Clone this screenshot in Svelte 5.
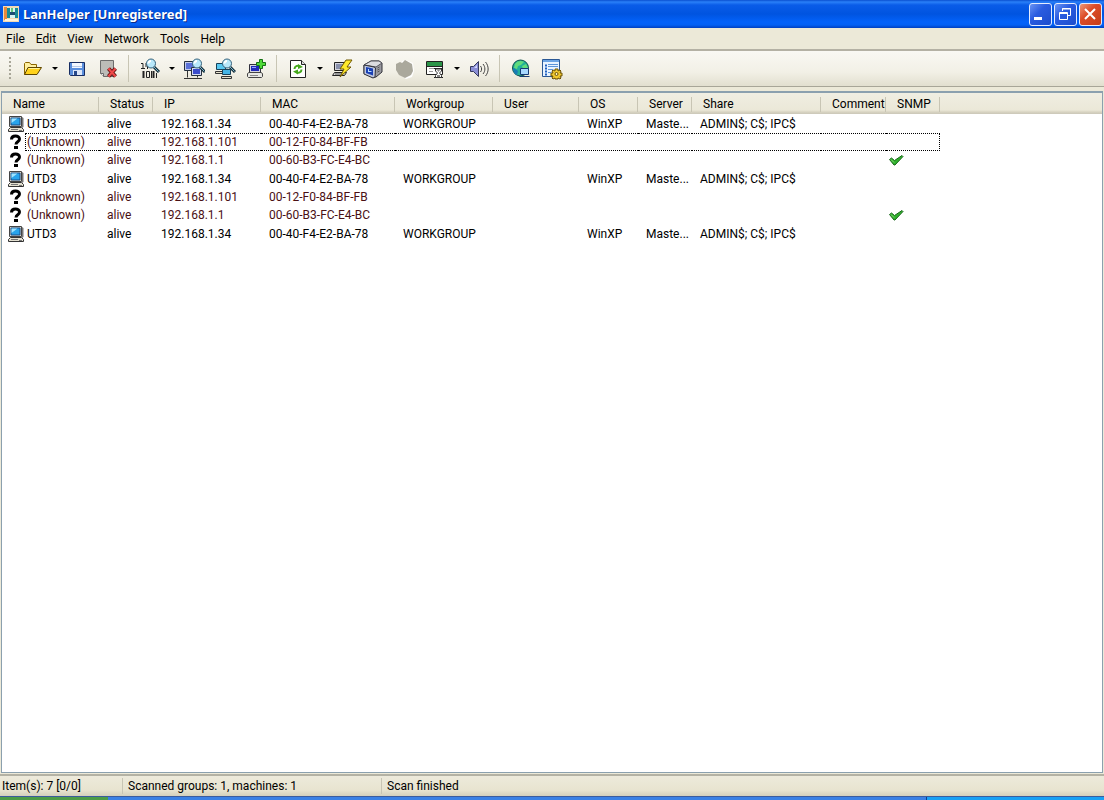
<script>
    const menus = ['File', 'Edit', 'View', 'Network', 'Tools', 'Help'];

    // Toolbar groups, drop marks a button with a menu arrow next to it
    const toolbar = [
        [
            { icon: 'open', label: 'Open', drop: true },
            { icon: 'save', label: 'Save' },
            { icon: 'delete', label: 'Delete' }
        ],
        [
            { icon: 'scanip', label: 'Scan IP', drop: true },
            { icon: 'scanlan', label: 'Scan LAN' },
            { icon: 'scangroup', label: 'Scan Workgroups' },
            { icon: 'add', label: 'Add Machine' }
        ],
        [
            { icon: 'refresh', label: 'Refresh', drop: true },
            { icon: 'wake', label: 'Wake Up' },
            { icon: 'remote', label: 'Remote' },
            { icon: 'stop', label: 'Stop', disabled: true },
            { icon: 'schedule', label: 'Schedule', drop: true },
            { icon: 'sound', label: 'Send Message' }
        ],
        [
            { icon: 'web', label: 'Web' },
            { icon: 'options', label: 'Options' }
        ]
    ];

    const columns = [
        { key: 'name', title: 'Name', width: 97 },
        { key: 'status', title: 'Status', width: 54 },
        { key: 'ip', title: 'IP', width: 108 },
        { key: 'mac', title: 'MAC', width: 134 },
        { key: 'workgroup', title: 'Workgroup', width: 98 },
        { key: 'user', title: 'User', width: 86 },
        { key: 'os', title: 'OS', width: 59 },
        { key: 'server', title: 'Server', width: 54 },
        { key: 'share', title: 'Share', width: 129 },
        { key: 'comment', title: 'Comment', width: 65 },
        { key: 'snmp', title: 'SNMP', width: 54 }
    ];

    const utd3 = {
        name: 'UTD3', status: 'alive', ip: '192.168.1.34', mac: '00-40-F4-E2-BA-78',
        workgroup: 'WORKGROUP', os: 'WinXP', server: 'Maste...', share: 'ADMIN$; C$; IPC$'
    };
    const client = { name: '(Unknown)', status: 'alive', ip: '192.168.1.101', mac: '00-12-F0-84-BF-FB', unknown: true };
    const router = { name: '(Unknown)', status: 'alive', ip: '192.168.1.1', mac: '00-60-B3-FC-E4-BC', unknown: true, snmp: true };

    const machines = [utd3, client, router, utd3, client, router, utd3];

    let focused = $state(1);
</script>

{#snippet lens(x)}
    <g transform="translate({x} 0)">
        <path d="M3 9l5 5" stroke="#17303c" stroke-width="3" />
        <path d="M3 9l4.500 4.500" stroke="#7cb8cc" stroke-width="1" />
        <circle cx="0" cy="5.500" r="4.500" fill="#b8e8fa" stroke="#34607a" />
        <path d="M-2.500 5.500a2.500 2.500 0 0 1 2.500-2.500" stroke="#fff" stroke-width="2" fill="none" />
    </g>
{/snippet}

{#snippet icon(name)}
    <svg viewBox="0 0 22 22" width="22" height="22" aria-hidden="true">
        {#if name === 'open'}
            <path d="M2.500 16.500v-11l1-1h4l1.500 2h5.500v3" fill="#fff0a0" stroke="#8a6500" />
            <path d="M2.500 16.500l3.500-7h13.500l-4.500 7z" fill="#ffd21c" stroke="#5e4500" />
            <path d="M6.500 10.500h11" stroke="#fff29a" />
        {:else if name === 'save'}
            <path d="M3.500 4.500h15v13h-14l-1-1z" fill="#5a8edc" stroke="#182d62" />
            <path d="M6 5h10v5H6z" fill="#f4f8ff" />
            <path d="M6 8h10v1H6z" fill="#b8cae8" />
            <path d="M7 12h9v5H7z" fill="#dce6f8" />
            <path d="M8 13h3v4H8z" fill="#26488a" />
        {:else if name === 'delete'}
            <path d="M3.500 2.500h13v16h-10l-3-3z" fill="#bcbcb8" stroke="#6c6c6c" />
            <path d="M3.500 15.500h3v3" fill="#eee" stroke="#6c6c6c" />
            <path d="M11.500 10.500l7 8M18.500 10.500l-7 8" stroke="#641414" stroke-width="4" />
            <path d="M11.500 10.500l7 8M18.500 10.500l-7 8" stroke="#f04a4a" stroke-width="2" />
        {:else if name === 'scanip'}
            <g fill="none" stroke="#222">
                <path d="M2 5.500h2v5M2 10.500h4M8.500 8v3M7 5v4" />
                <path d="M4.500 13v7M14.500 13v7" stroke-width="2" />
                <path d="M7.500 13.500h3v6h-3z" />
                <path d="M12.500 13v7M17.500 15v5" />
            </g>
            {@render lens(12)}
        {:else if name === 'scanlan'}
            <path d="M4.500 13v6.500M1 20.500h9M14.500 17v2.500M10 20.500h9" stroke="#333" fill="none" />
            <path d="M1.500 3.500h10v9h-10z" fill="#c4ccea" stroke="#25303f" />
            <path d="M3 5h7v6H3z" fill="#5a70d8" />
            <path d="M8.500 9.500h10v8h-10z" fill="#d4dcf4" stroke="#25303f" />
            <path d="M10 11h7v5h-7z" fill="#3a4ccc" />
            {@render lens(14)}
        {:else if name === 'scangroup'}
            <path d="M2.500 5.500h9v6h-9z" fill="#58c8f0" stroke="#164058" />
            <path d="M1.500 13.500h9v2h-9z" fill="#e4e0cc" stroke="#333" />
            <path d="M8.500 11.500h8v5h-8z" fill="#45b4e6" stroke="#164058" />
            <path d="M7.500 18.500h10v2h-10z" fill="#e4e0cc" stroke="#333" />
            {@render lens(13)}
        {:else if name === 'add'}
            <path d="M4.500 6.500h11v8h-11z" fill="#d5d5df" stroke="#30303c" />
            <path d="M6 8h8v5H6z" fill="#2028b8" />
            <path d="M7 9h4v1H7z" fill="#8fa4ff" />
            <path d="M2.500 15.500l1.500-1h12l1.500 1v3l-1 1h-13l-1-1z" fill="#e8e8e4" stroke="#444" />
            <path d="M5 17.500h8" stroke="#888" />
            <path d="M14.500 1.500h3v3h3v3h-3v3h-3v-3h-3v-3h3z" fill="#4fda38" stroke="#147012" />
        {:else if name === 'refresh'}
            <path d="M3.500 2.500h11l4 4v13h-15z" fill="#fff" stroke="#222" />
            <path d="M14.500 2.500v4h4" fill="#ddd" stroke="#222" />
            <path d="M7.500 11c0-3 3-4 5.500-2.500M14.500 11.500c0 3-3 4-5.500 2.500" stroke="#45a81c" stroke-width="2" fill="none" />
            <path d="M11 6l5 3-5 2zM11 11.500l-5 2 5 3z" fill="#45a81c" />
        {:else if name === 'wake'}
            <path d="M3.500 4.500h11v8h-11z" fill="#d4d4dc" stroke="#222" />
            <path d="M5 6h8v5H5z" fill="#8890ac" />
            <path d="M1.500 17.500l2-3h12l-2 3z" fill="#ddd" stroke="#222" />
            <path d="M4 16h8" stroke="#555" />
            <path d="M15 2l-6 9h4l-4 8 11-10h-4l5-7z" fill="#ffe92a" stroke="#705900" />
        {:else if name === 'remote'}
            <path d="M2 7l7-4h8l3 2v9l-6 5-3 .500-9-4z" fill="#9a9aa0" stroke="#33333a" />
            <path d="M9 3h8l3 2-6 4-12-2z" fill="#dcdce0" stroke="#55555c" />
            <path d="M2 7l10 2 1.500 1-.500 9-2 1-9-4z" fill="#c0c8e0" stroke="#33333a" />
            <path d="M4 9l7 1.500v7L4 15z" fill="#1b41b4" />
            <path d="M6 13.500h3.500M6.500 11v3" stroke="#b8dcff" fill="none" />
            <path d="M15.500 10l2-1M15.500 12l2-1M15.500 14l2-1" stroke="#555" />
        {:else if name === 'stop'}
            <path d="M9 3l4-1 7 3 1 8-2 6-6 2-6-4z" fill="#fff" />
            <path d="M3 6l4-2 2 1 3-3 7 4 1 7-2 4-6 3-6-3-3-5z" fill="#aaa89c" />
        {:else if name === 'schedule'}
            <path d="M2.500 3.500h16v13h-16z" fill="#fff" stroke="#222" />
            <path d="M3 4h15v4H3z" fill="#2b9448" />
            <path d="M3 8.500h15" stroke="#222" />
            <path d="M5 10.500h5M5 13.500h4" stroke="#999" />
            <path d="M10 10.500h9M10 19.500h9" stroke="#222" />
            <path d="M11.500 11v2l2 2-2 2.500v2h6v-2l-2-2.500 2-2v-2z" fill="#fff" stroke="#333" />
            <path d="M13 17h3v2h-3zM13 12h3l-1.500 2z" fill="#888" />
        {:else if name === 'sound'}
            <path d="M2.500 8.500h3l5-5v15l-5-5h-3z" fill="#8b8fd6" stroke="#34385c" />
            <path d="M4 10h2l3-3v3z" fill="#d4d8ff" />
            <path d="M12.500 8c1.500 2 1.500 4 0 6M15 6c2.500 3 2.500 7 0 10M17.500 4c3.500 4 3.500 10 0 14" stroke="#444" fill="none" />
        {:else if name === 'web'}
            <circle cx="10.500" cy="10" r="8" fill="#22b09a" stroke="#12524c" />
            <path d="M5 6c2-3 6-4 9-2l-3 3-3 1-1 3-3-1zM12 8l4-2 2 4-5 1z" fill="#62dc7c" />
            <path d="M3 10c2 0 3 2 5 3l-1 4c-3-1-4-4-4-7z" fill="#187cb4" />
            <path d="M10.500 10.500h8v6h-8z" fill="#a8d8ff" stroke="#163a74" />
            <path d="M9.500 18.500h10" stroke="#163a74" />
        {:else if name === 'options'}
            <path d="M1.500 1.500h17v17h-17z" fill="#e8f3ff" stroke="#2b5894" />
            <path d="M2 2h16v2H2z" fill="#6ca4e4" />
            <path d="M4 7.500h2M4 10.500h2M4 13.500h2M4 16.500h2" stroke="#2060c0" stroke-width="2" />
            <path d="M7 6.500h10M7 8.500h10M7 11.500h5M7 14.500h3" stroke="#5c94d8" />
            <path d="M14 11h3v2l2-1 1 1-1 2h2v3h-2l1 2-1 1-2-1v1h-3v-1l-2 1-1-1 1-2h-2v-3h2l-1-2 1-1 2 1z" fill="#f0c830" stroke="#6b5004" />
            <circle cx="15.500" cy="16" r="1.500" fill="#fff6c4" stroke="#6b5004" />
        {/if}
    </svg>
{/snippet}

{#snippet machineIcon()}
    <svg viewBox="0 0 18 18" width="18" height="18" aria-hidden="true">
        <path d="M2.500 1.500h12v10h-12z" fill="#d8d4c8" stroke="#444" />
        <path d="M4 3h9v7H4z" fill="#28a4ec" stroke="#174e8c" />
        <path d="M4.500 8l6-4.500h-6z" fill="#a0e4ff" />
        <path d="M15 2l1.500 1v9l-1.500 1z" fill="#777" />
        <path d="M1.500 14.500l2-2h11l2 2v2h-15z" fill="#e4e0d0" stroke="#333" />
        <path d="M4 14.500h7M12 15.500h3" stroke="#777" />
    </svg>
{/snippet}

{#snippet unknownIcon()}
    <svg viewBox="0 0 18 18" width="18" height="18" aria-hidden="true">
        <path d="M4.500 6.500c0-4.500 8-4.500 8-.5 0 3-3.500 2.500-3.500 5.500" fill="none" stroke="#000" stroke-width="3" />
        <path d="M7 13h4v3H7z" />
    </svg>
{/snippet}

<div class="window">
    <header class="titlebar">
        <svg class="app-icon" viewBox="0 0 16 16" width="16" height="16" aria-hidden="true">
            <path d="M0 0h16v16H0z" fill="#f2d9b4" />
            <path d="M1 1h3v13H1z" fill="#e88a3c" />
            <path d="M4 2h11v10H4z" fill="#d8f4f4" />
            <path d="M4 2h3v10H4zM12 2h3v10h-3z" fill="#188a94" />
            <path d="M7 6h5v3H7z" fill="#1d4c74" />
            <path d="M8 2h2v4H8z" fill="#68c878" />
            <path d="M2 13h13v2H2z" fill="#fff4dc" />
        </svg>
        <h1>LanHelper [Unregistered]</h1>
        <div class="caption-buttons">
            <button class="caption" aria-label="Minimize">
                <svg viewBox="0 0 20 20" width="20" height="20"><path d="M4 13h8v3H4z" fill="#fff" /></svg>
            </button>
            <button class="caption" aria-label="Restore">
                <svg viewBox="0 0 20 20" width="20" height="20" fill="none" stroke="#fff">
                    <path d="M7.500 7V4.500h8v7H13M7 5h9" />
                    <path d="M4.500 8.500h8v7h-8zM4 9.500h9" />
                </svg>
            </button>
            <button class="caption close" aria-label="Close">
                <svg viewBox="0 0 20 20" width="20" height="20"><path d="M5 5l10 10M15 5L5 15" stroke="#fff" stroke-width="2" /></svg>
            </button>
        </div>
    </header>

    <nav class="menubar">
        {#each menus as menu}
            <button>{menu}</button>
        {/each}
    </nav>

    <div class="toolbar" role="toolbar" aria-label="Main">
        <span class="grip"></span>
        {#each toolbar as group}
            <div class="group">
                {#each group as tool}
                    <button class="tool" aria-label={tool.label} disabled={tool.disabled}>
                        {@render icon(tool.icon)}
                    </button>
                    {#if tool.drop}
                        <button class="drop" aria-label="{tool.label} menu">
                            <svg viewBox="0 0 6 3" width="6" height="3"><path d="M0 0h6L3 3z" /></svg>
                        </button>
                    {/if}
                {/each}
            </div>
        {/each}
    </div>

    <main class="list">
        <table>
            <colgroup>
                {#each columns as column}
                    <col style="width: {column.width}px" />
                {/each}
                <col />
            </colgroup>
            <thead>
                <tr>
                    {#each columns as column}
                        <th>{column.title}</th>
                    {/each}
                    <td></td>
                </tr>
            </thead>
            <tbody>
                {#each machines as machine, i}
                    <tr class:unknown={machine.unknown} class:focused={focused === i} onclick={() => (focused = i)}>
                        {#each columns as column}
                            {#if column.key === 'name'}
                                <td class="name">
                                    <div class="name-cell">
                                        {#if machine.unknown}
                                            {@render unknownIcon()}
                                        {:else}
                                            {@render machineIcon()}
                                        {/if}
                                        <span class="label">{machine.name}</span>
                                    </div>
                                </td>
                            {:else if column.key === 'snmp'}
                                <td class="snmp">
                                    {#if machine.snmp}
                                        <svg viewBox="0 0 16 12" width="16" height="12" aria-label="Yes">
                                            <path d="M1.500 5.500l2-1.500 3 2.500 7.500-5 1 1-8 8.500H6z" fill="#30b02c" stroke="#1b681c" />
                                            <path d="M3 5.500l3 3" stroke="#86e074" />
                                        </svg>
                                    {/if}
                                </td>
                            {:else}
                                <td>{machine[column.key] ?? ''}</td>
                            {/if}
                        {/each}
                        <td class="filler"></td>
                    </tr>
                {/each}
            </tbody>
        </table>
    </main>

    <footer class="statusbar">
        <span class="items">Item(s): 7 [0/0]</span>
        <span class="groups">Scanned groups: 1, machines: 1</span>
        <span class="state">Scan finished</span>
    </footer>

    <div class="taskbar">
        <span class="start"></span>
        <span class="tasks"></span>
        <span class="tray"></span>
    </div>
</div>

<style>
    :global(body) {
        background: #ece9d8;
    }

    .window {
        display: flex;
        flex-direction: column;
        min-height: 100vh;
        background: #ece9d8;
        font-family: Roboto, sans-serif;
        font-size: 12px;
        line-height: 16px;
        color: #000;
    }

    button {
        padding: 0;
        border: 0;
        background: none;
        font: inherit;
        color: inherit;
    }

    svg {
        display: block;
        flex: none;
    }

    /* Title bar */
    .titlebar {
        display: flex;
        align-items: center;
        height: 28px;
        padding: 0 2px 0 3px;
        box-sizing: border-box;
        background: linear-gradient(#0a4fd0 0, #2a80f8 2px, #0a5ce8 5px, #0054e0 14px, #0362fa 22px, #0360f4 25px, #0040c0 28px);
    }

    h1 {
        flex: 1;
        margin: 0 0 0 4px;
        font-family: "Noto Sans", sans-serif;
        font-size: 13px;
        font-weight: 700;
        line-height: 20px;
        color: #fff;
        text-shadow: 1px 1px #0a2c88;
    }

    .caption-buttons {
        display: flex;
        gap: 2px;
    }

    .caption {
        width: 23px;
        height: 23px;
        box-sizing: border-box;
        border: 1px solid #e4ecff;
        border-radius: 3px;
        background: linear-gradient(135deg, #6a94f4, #2a5ce0 40%, #1c4ccc);
    }

    .caption.close {
        background: linear-gradient(135deg, #f09878, #dc4c28 40%, #c43c18);
    }

    /* Menu */
    .menubar {
        display: flex;
        gap: 11px;
        height: 21px;
        padding: 0 6px;
        align-items: center;
    }

    /* Toolbar */
    .toolbar {
        display: flex;
        align-items: center;
        height: 35px;
        border-top: 2px solid #b4b1a4;
        border-bottom: 1px solid #a8a698;
        background: linear-gradient(#f9f8f3, #f2f0e6 60%, #e2dfcf);
    }

    .grip {
        width: 2px;
        height: 24px;
        margin: 0 6px 0 9px;
        background: repeating-linear-gradient(#a8a698 0 2px, transparent 2px 4px);
    }

    .group {
        display: flex;
        align-items: center;
    }

    .group + .group::before {
        content: "";
        width: 1px;
        height: 27px;
        margin: 0 5px;
        background: #c8c5b4;
    }

    .tool {
        display: flex;
        justify-content: center;
        width: 31px;
    }

    .drop {
        display: flex;
        justify-content: center;
        align-items: center;
        width: 13px;
        height: 22px;
    }

    /* Machine list */
    .list {
        flex: 1;
        margin: 4px 1px 0;
        border: 1px solid #8ba0ae;
        border-top-width: 2px;
        background: #fff;
    }

    table {
        width: 100%;
        table-layout: fixed;
        border-collapse: separate;
        border-spacing: 0;
    }

    thead tr {
        background: linear-gradient(#f0eee2, #ebe8d8 17px, #d8d4c2 19px, #cbc7b8);
    }

    th {
        height: 21px;
        padding: 0 0 0 11px;
        box-sizing: border-box;
        font-weight: 400;
        text-align: left;
        background: linear-gradient(#c8c5b4, #c8c5b4) right 4px / 1px 15px no-repeat;
    }

    td {
        height: 19px;
        padding: 0 0 0 8px;
        box-sizing: border-box;
        line-height: 16px;
        white-space: nowrap;
    }

    .unknown td {
        height: 18px;
        color: #4a1014;
    }

    td.name {
        padding-left: 5px;
    }

    .name-cell {
        display: flex;
        align-items: center;
        height: 18px;
    }

    .label {
        flex: 1;
        padding-left: 1px;
        border: 1px solid transparent;
        border-right: 0;
    }

    td.snmp {
        padding-left: 2px;
    }

    .focused td:not(.name, .filler) {
        border-top: 1px dotted #000;
        border-bottom: 1px dotted #000;
    }

    .focused td.snmp {
        border-right: 1px dotted #000;
    }

    .focused .label {
        border-color: #000;
        border-style: dotted;
        border-right: 0;
    }

    /* Status bar */
    .statusbar {
        display: flex;
        align-items: center;
        height: 20px;
        margin-top: 1px;
        border-top: 2px solid #b4b2a4;
        background: linear-gradient(#edeadb, #e8e4d0 70%, #d4d0bc);
    }

    .statusbar span {
        box-sizing: border-box;
        padding-left: 5px;
        border-left: 1px solid #c8c5b4;
    }

    .statusbar .items {
        width: 122px;
        padding-left: 2px;
        border-left: 0;
    }

    .statusbar .groups {
        width: 259px;
    }

    /* Top edge of the desktop taskbar */
    .taskbar {
        display: flex;
        height: 4px;
        border-top: 1px solid #3c5c9c;
        box-sizing: border-box;
    }

    .start {
        width: 108px;
        background: #4c9c48;
    }

    .tasks {
        flex: 1;
        background: #3a80e4;
    }

    .tray {
        width: 16%;
        border-left: 1px solid #0c3c8c;
        background: #18a0f4;
    }
</style>
